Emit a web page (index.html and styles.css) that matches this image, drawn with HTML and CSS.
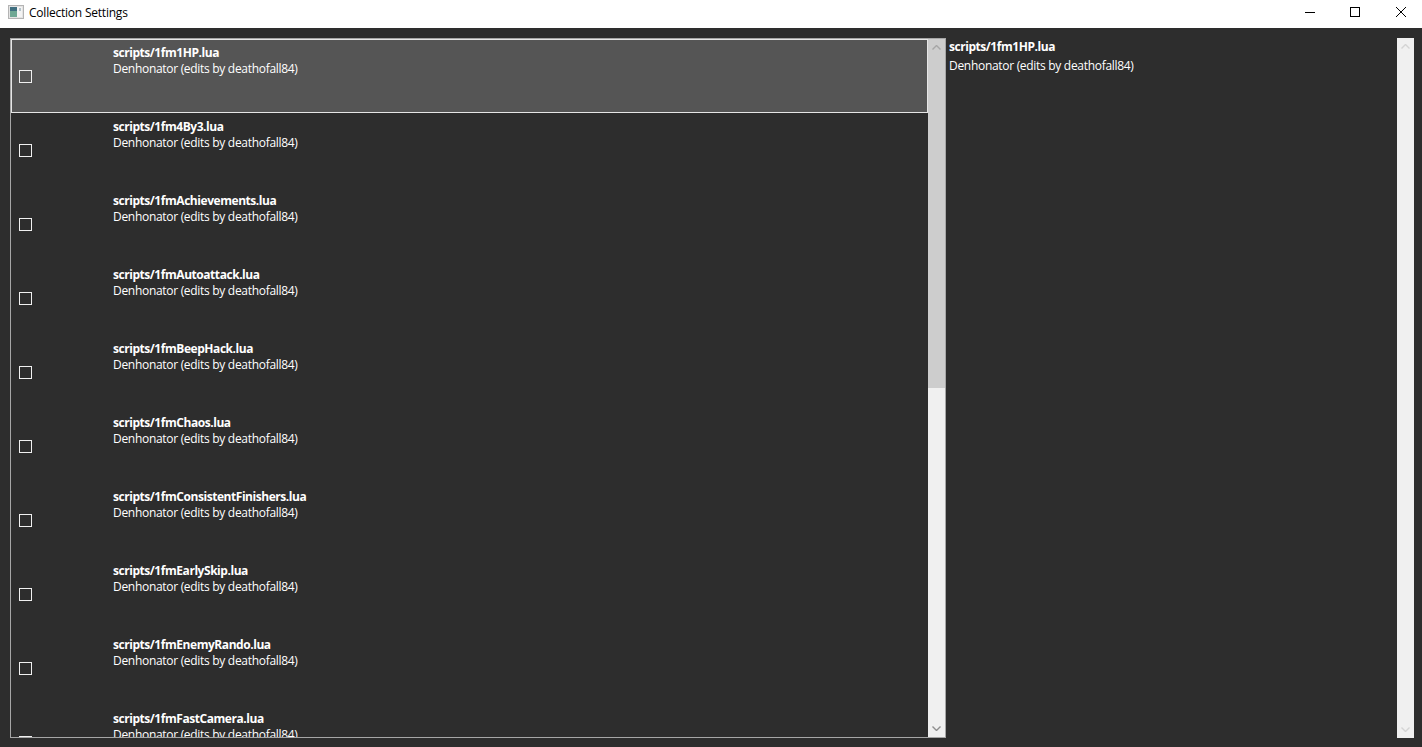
FILE: index.html
```html
<!DOCTYPE html>
<html lang="en">
<head>
    <meta charset="UTF-8">
    <title>Collection Settings</title>
    <link rel="stylesheet" href="styles.css">
</head>
<body>
    <div class="titlebar">
        <svg class="app-icon" width="16" height="14" viewBox="0 0 16 14">
            <rect x="0.5" y="0.5" width="15" height="13" fill="#e4e4e4" stroke="#b4b4b4"/>
            <rect x="2" y="2" width="7" height="10" fill="#6fa894"/>
            <rect x="2" y="2" width="7" height="4" fill="#3f6f80"/>
            <rect x="9" y="2" width="5" height="10" fill="#f4f4f4"/>
            <rect x="11" y="3" width="2" height="3" fill="#b5c4cc"/>
        </svg>
        <span class="title">Collection Settings</span>
        <div class="win-buttons">
            <div class="win-btn">
                <svg width="10" height="10" viewBox="0 0 10 10"><path d="M0 5.5H10" stroke="#000" fill="none"/></svg>
            </div>
            <div class="win-btn">
                <svg width="10" height="10" viewBox="0 0 10 10"><rect x="0.5" y="0.5" width="9" height="9" stroke="#000" fill="none"/></svg>
            </div>
            <div class="win-btn close">
                <svg width="10" height="10" viewBox="0 0 10 10"><path d="M0 0L10 10M10 0L0 10" stroke="#000" fill="none"/></svg>
            </div>
        </div>
    </div>

    <div class="content">
        <div class="list-box">
            <div class="rows">
                <div class="row selected">
                    <span class="check"></span>
                    <div class="row-text">
                        <div class="name">scripts/1fm1HP.lua</div>
                        <div class="author">Denhonator (edits by deathofall84)</div>
                    </div>
                </div>
                <div class="row">
                    <span class="check"></span>
                    <div class="row-text">
                        <div class="name">scripts/1fm4By3.lua</div>
                        <div class="author">Denhonator (edits by deathofall84)</div>
                    </div>
                </div>
                <div class="row">
                    <span class="check"></span>
                    <div class="row-text">
                        <div class="name">scripts/1fmAchievements.lua</div>
                        <div class="author">Denhonator (edits by deathofall84)</div>
                    </div>
                </div>
                <div class="row">
                    <span class="check"></span>
                    <div class="row-text">
                        <div class="name">scripts/1fmAutoattack.lua</div>
                        <div class="author">Denhonator (edits by deathofall84)</div>
                    </div>
                </div>
                <div class="row">
                    <span class="check"></span>
                    <div class="row-text">
                        <div class="name">scripts/1fmBeepHack.lua</div>
                        <div class="author">Denhonator (edits by deathofall84)</div>
                    </div>
                </div>
                <div class="row">
                    <span class="check"></span>
                    <div class="row-text">
                        <div class="name">scripts/1fmChaos.lua</div>
                        <div class="author">Denhonator (edits by deathofall84)</div>
                    </div>
                </div>
                <div class="row">
                    <span class="check"></span>
                    <div class="row-text">
                        <div class="name">scripts/1fmConsistentFinishers.lua</div>
                        <div class="author">Denhonator (edits by deathofall84)</div>
                    </div>
                </div>
                <div class="row">
                    <span class="check"></span>
                    <div class="row-text">
                        <div class="name">scripts/1fmEarlySkip.lua</div>
                        <div class="author">Denhonator (edits by deathofall84)</div>
                    </div>
                </div>
                <div class="row">
                    <span class="check"></span>
                    <div class="row-text">
                        <div class="name">scripts/1fmEnemyRando.lua</div>
                        <div class="author">Denhonator (edits by deathofall84)</div>
                    </div>
                </div>
                <div class="row">
                    <span class="check"></span>
                    <div class="row-text">
                        <div class="name">scripts/1fmFastCamera.lua</div>
                        <div class="author">Denhonator (edits by deathofall84)</div>
                    </div>
                </div>
            </div>
            <div class="scrollbar">
                <div class="thumb">
                    <svg class="arrow" width="9" height="5" viewBox="0 0 9 5"><path d="M0.5 4.5L4.5 0.5L8.5 4.5" stroke="#a6a6a6" stroke-width="1.4" fill="none"/></svg>
                </div>
                <div class="track">
                    <svg class="arrow" width="9" height="5" viewBox="0 0 9 5"><path d="M0.5 0.5L4.5 4.5L8.5 0.5" stroke="#8f8f8f" stroke-width="1.4" fill="none"/></svg>
                </div>
            </div>
        </div>

        <div class="details">
            <div class="detail-name">scripts/1fm1HP.lua</div>
            <div class="detail-author">Denhonator (edits by deathofall84)</div>
        </div>

        <div class="scrollbar side">
            <div class="track">
                <svg class="arrow" width="9" height="5" viewBox="0 0 9 5"><path d="M0.5 4.5L4.5 0.5L8.5 4.5" stroke="#d4d4d4" stroke-width="1.4" fill="none"/></svg>
                <svg class="arrow" width="9" height="5" viewBox="0 0 9 5"><path d="M0.5 0.5L4.5 4.5L8.5 0.5" stroke="#d4d4d4" stroke-width="1.4" fill="none"/></svg>
            </div>
        </div>
    </div>
</body>
</html>
```

FILE: styles.css
```css
/* Ventana */
html, body {
    height: 100%;
}

body {
    margin: 0;
    display: flex;
    flex-direction: column;
    overflow: hidden;
    background-color: #2d2d2d;
    color: #fff;
    font-family: 'Open Sans', 'Noto Sans', sans-serif;
    font-size: 12px;
}

.titlebar {
    height: 28px;
    flex-shrink: 0;
    box-sizing: border-box;
    display: flex;
    align-items: center;
    padding: 0 0 4px 8px;
    background-color: #fff;
}

.app-icon {
    margin-right: 5px;
}

.title {
    color: #000;
    letter-spacing: -0.22px;
}

.win-buttons {
    margin-left: auto;
    display: flex;
}

.win-btn {
    width: 45px;
    height: 24px;
    box-sizing: border-box;
    display: flex;
    justify-content: center;
    align-items: center;
}

.win-btn.close {
    padding-left: 2px;
}

/* Contenido */
.content {
    flex: 1;
    min-height: 0;
    display: flex;
    padding: 10px 8px 9px 10px;
}

.list-box {
    width: 936px;
    flex-shrink: 0;
    box-sizing: border-box;
    display: flex;
    border: 1px solid #a6a6a6;
    overflow: hidden;
}

.rows {
    flex: 1;
    min-width: 0;
    overflow: hidden;
}

.row {
    height: 74px;
    box-sizing: border-box;
    display: flex;
    padding-left: 8px;
}

.row.selected {
    background-color: #555;
    border: 1px solid #e6e6e6;
    padding-left: 7px;
}

.check {
    width: 11px;
    height: 11px;
    margin-top: 31px;
    flex-shrink: 0;
    border: 1px solid #f0f0f0;
}

.row.selected .check {
    margin-top: 30px;
}

.row-text {
    margin-left: 81px;
    padding-top: 6px;
    line-height: 16px;
}

.row.selected .row-text {
    padding-top: 5px;
}

.name, .detail-name {
    font-weight: 700;
    letter-spacing: -0.45px;
}

.author, .detail-author {
    letter-spacing: -0.3px;
}

/* Barras de desplazamiento */
.scrollbar {
    width: 17px;
    flex-shrink: 0;
    display: flex;
    flex-direction: column;
    background-color: #f0f0f0;
}

.thumb {
    height: 349px;
    flex-shrink: 0;
    display: flex;
    justify-content: center;
    padding-top: 6px;
    box-sizing: border-box;
    background-color: #cdcdcd;
}

.track {
    flex: 1;
    display: flex;
    flex-direction: column;
    justify-content: flex-end;
    align-items: center;
    padding-bottom: 6px;
}

.side .track {
    justify-content: space-between;
    padding-top: 6px;
}

.details {
    flex: 1;
    min-width: 0;
    padding: 0 0 0 3px;
    line-height: 16px;
}

.detail-name {
    margin-bottom: 3px;
    margin-top: 1px;
}
```
